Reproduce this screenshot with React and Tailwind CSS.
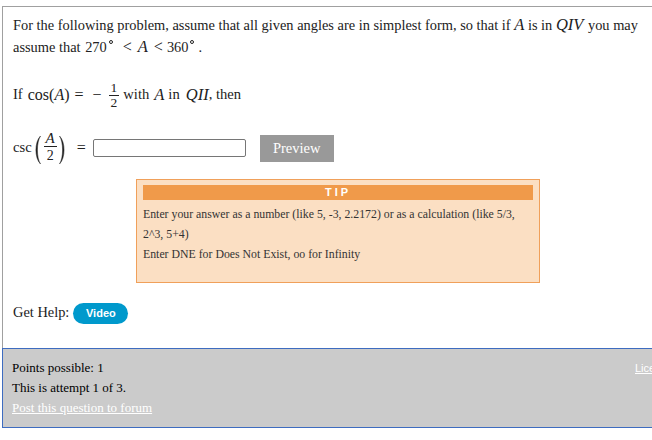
import React from "react";

const serif = "font-['Liberation_Serif',serif]";

// italic math letters, a bit larger than the body text like MathJax
const M = ({ children, className = "" }) => (
  <span className={`italic text-[16.5px] leading-none ${className}`}>{children}</span>
);

const Deg = () => (
  <span className="inline-block w-[4px] h-[4px] rounded-full border border-[#222] relative -top-[8px] ml-[2px]" />
);

const Paren = ({ flip = false }) => (
  <svg width="9" height="30" viewBox="0 0 9 30" className={flip ? "-scale-x-100" : ""}>
    <path d="M7.5 1 C1.4 7 1.4 23 7.5 29 C3.4 23 3.4 7 7.5 1 Z" fill="#222" stroke="#222" strokeWidth="0.5" />
  </svg>
);

export default function App() {
  return (
    <div className={`w-[652px] h-[440px] overflow-hidden bg-white text-[#222] ${serif} pt-[6px] pl-[2px]`}>
      <div className="w-[720px] h-[342px] border-l border-t border-[#a0a0a0] pl-[10px] pt-[7px]">
        <p className="text-[14.4px] leading-[22px] w-[636px]">
          For the following problem, assume that all given angles are in simplest form, so that if <M>A</M> is in <M className="mr-[1px]">QIV</M> you may assume that <span className="ml-[1px]">270</span><Deg /><span className="text-[16px] ml-[10px]">&lt;</span><M className="ml-[6px]">A</M><span className="text-[16px] ml-[6px]">&lt;</span><span className="ml-[4px]">360</span><Deg /><span className="ml-[4px]">.</span>
        </p>

        <div className="mt-[24px] h-[26px] flex items-center text-[14.6px]">
          <span>If</span>
          <span className="ml-[5px] text-[16px]">cos(<i>A</i>)</span>
          <span className="ml-[5px] text-[16px]">=</span>
          <span className="ml-[9px] text-[16px]">−</span>
          <span className="ml-[7px] inline-flex flex-col items-center text-[13.5px] leading-[14px]">
            <span className="px-[2px]">1</span>
            <span className="px-[2px] border-t border-[#222] w-full text-center">2</span>
          </span>
          <span className="ml-[4px]">with</span>
          <M className="ml-[5px]">A</M>
          <span className="ml-[4px]">in</span>
          <M className="ml-[6px]">QII</M>
          <span>, then</span>
        </div>

        <div className="mt-[22px] h-[36px] flex items-center">
          <span className="text-[14.6px]">csc</span>
          <span className="ml-[1px] flex items-center mt-[4px]"><Paren /></span>
          <span className="ml-[2px] inline-flex flex-col items-center leading-[15px] -mt-[2px]">
            <span className="italic text-[15px] px-[1px]">A</span>
            <span className="border-t border-[#222] w-[13px] text-center text-[14px] pt-[1px]">2</span>
          </span>
          <span className="ml-[1px] flex items-center mt-[4px]"><Paren flip /></span>
          <span className="ml-[10px] text-[16px]">=</span>
          <input
            type="text"
            className="ml-[7px] w-[153px] h-[18px] border border-[#767676] rounded-[2px] bg-white"
          />
          <button className="ml-[14px] w-[74px] h-[27px] bg-[#999999] text-white text-[14.5px] leading-none">
            Preview
          </button>
        </div>

        <div className="ml-[123px] mt-[13px] w-[404px] h-[104px] bg-[#fbdfc3] border border-[#f0a05a] px-[6px] pt-[5px]">
          <div className="h-[15px] bg-[#f09a4a] text-white text-[11px] font-bold font-['Liberation_Sans',sans-serif] tracking-[3px] flex items-center justify-center leading-none">
            TIP
          </div>
          <div className="mt-[4px] text-[11.8px] leading-[20px] text-[#333] pr-[6px]">
            <p>Enter your answer as a number (like 5, -3, 2.2172) or as a calculation (like 5/3, 2^3, 5+4)</p>
            <p>Enter DNE for Does Not Exist, oo for Infinity</p>
          </div>
        </div>

        <div className="mt-[19px] h-[22px] flex items-center text-[14.4px]">
          <span>Get Help:</span>
          <button className="ml-[4px] h-[21px] w-[55px] rounded-full bg-[#0099cc] text-white text-[11px] font-bold font-['Liberation_Sans',sans-serif]">
            Video
          </button>
        </div>
      </div>

      <div className="w-[690px] h-[80px] border border-[#3e6cc0] bg-[#cbcbcb] pl-[9px] pr-[10px] pt-[9px] flex text-[13px] leading-[20px] text-black">
        <div className="flex-1">
          <p>Points possible: 1</p>
          <p>This is attempt 1 of 3.</p>
          <p className="text-white underline">Post this question to forum</p>
        </div>
        <a className="text-white underline text-[11px] font-['Liberation_Sans',sans-serif] w-[46px]">License</a>
      </div>
    </div>
  );
}
